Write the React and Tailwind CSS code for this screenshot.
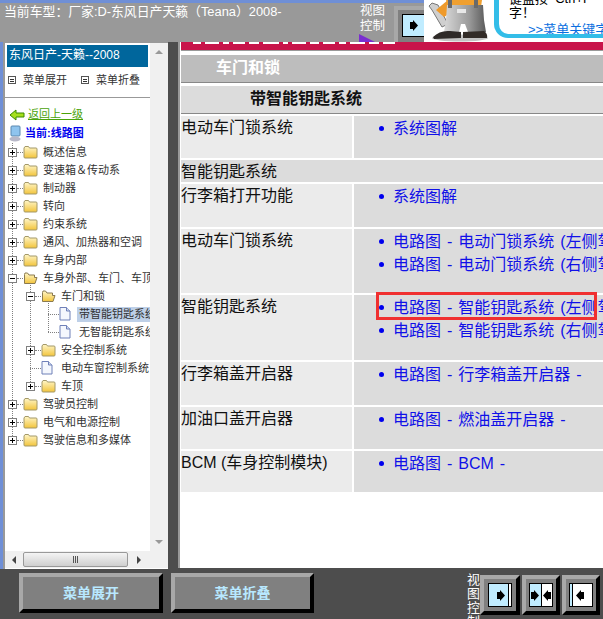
import React from "react";

const cjk = { fontFamily: '"Liberation Sans","Noto Sans CJK SC",sans-serif' };

function Box({ open }) {
  return (
    <span className="w-[9px] h-[9px] border border-[#808080] bg-white flex items-center justify-center relative shrink-0">
      <span className="absolute w-[5px] h-px bg-black" />
      {!open && <span className="absolute w-px h-[5px] bg-black" />}
    </span>
  );
}

function Folder({ open }) {
  return (
    <svg width="15" height="14" viewBox="0 0 15 14" className="shrink-0">
      <defs>
        <linearGradient id="fg" x1="0" y1="0" x2="0" y2="1">
          <stop offset="0" stopColor="#fff6c8" />
          <stop offset="1" stopColor="#f2c43c" />
        </linearGradient>
      </defs>
      {open ? (
        <path d="M1.5 3.5 L1.5 12.5 L12 12.5 L14 6.5 L11.5 6.5 L11.5 4 L6 4 L4.5 2 L2 2 Z" fill="url(#fg)" stroke="#8a7a50" />
      ) : (
        <path d="M1 3 L2 1.5 L5.5 1.5 L6.5 3 L13 3 Q14 3 14 4 L14 12 Q14 13 13 13 L2 13 Q1 13 1 12 Z" fill="url(#fg)" stroke="#a39868" />
      )}
    </svg>
  );
}

function Doc() {
  return (
    <svg width="12" height="14" viewBox="0 0 12 14" className="shrink-0">
      <path d="M1 .5 L7.5 .5 L11 4 L11 13 L1 13 Z" fill="#f4f7fd" stroke="#6f80b8" />
      <path d="M7.5 .5 L7.5 4 L11 4" fill="#cfd9ef" stroke="#6f80b8" />
    </svg>
  );
}

function TreeRow({ indent, kind, text, open, selected }) {
  const doc = kind === "doc";
  return (
    <div className="h-[18px] flex items-center whitespace-nowrap relative" style={{ paddingLeft: indent }}>
      {!doc && <Box open={open} />}
      <span className={"border-t border-dotted border-[#808080] shrink-0 " + (doc ? "w-[11px]" : "w-[6px]")} />
      {doc ? <Doc /> : <Folder open={open} />}
      <span
        className={
          "text-[11px] leading-[15px] px-[2px] text-[#333] " +
          (doc ? "ml-[6px] " : "ml-[3px] ") +
          (selected ? "bg-[#bed0e8]" : "")
        }
      >
        {text}
      </span>
    </div>
  );
}

function Row({ left, links, h }) {
  return (
    <div className="flex gap-[2px] mt-[2px]" style={{ height: h }}>
      <div className="w-[171px] bg-[#ebebeb] text-[16px] leading-[22px] text-[#111] pt-[1px] whitespace-nowrap">{left}</div>
      <div className="flex-1 bg-[#dcdcdc] pt-[1px] overflow-hidden">
        {links.map((l, i) => (
          <div key={i} className="flex items-center h-[23px] whitespace-nowrap text-[16px] text-[#1010e8] pl-[25px] [word-spacing:1.5px]">
            <span className="w-[5px] h-[5px] rounded-full bg-[#0000ee] mr-[9px] shrink-0" />
            {l}
          </div>
        ))}
      </div>
    </div>
  );
}

function Bevel({ w, children }) {
  return (
    <div
      className={
        "flex items-center justify-center border-[4px] border-t-[#a8a8a8] border-l-[#a8a8a8] border-r-black border-b-black bg-[#808080] shrink-0 " +
        w
      }
    >
      {children}
    </div>
  );
}

function Tri({ d }) {
  return (
    <svg width="8" height="11" viewBox="0 0 8 11">
      {d === "r" ? (
        <path d="M0 2 H3 V0 L8 5.5 L3 11 V9 H0 Z" fill="#000" />
      ) : (
        <path d="M8 2 H5 V0 L0 5.5 L5 11 V9 H8 Z" fill="#000" />
      )}
    </svg>
  );
}

function Split({ mode }) {
  return (
    <div className="w-[24px] h-[24px] border border-black flex bg-white shrink-0">
      {mode === "r" && (
        <>
          <div className="flex-1 bg-[#c0ecff] flex items-center justify-end pr-[3px]"><Tri d="r" /></div>
          <div className="w-[3px] border-l border-black" />
        </>
      )}
      {mode === "m" && (
        <>
          <div className="flex-1 bg-[#c0ecff] border-r border-black flex items-center justify-center"><Tri d="r" /></div>
          <div className="flex-1 flex items-center justify-center"><Tri d="l" /></div>
        </>
      )}
      {mode === "l" && (
        <>
          <div className="w-[3px] bg-[#c0ecff] border-r border-black" />
          <div className="flex-1 flex items-center justify-start pl-[3px]"><Tri d="l" /></div>
        </>
      )}
    </div>
  );
}

function Mechanic() {
  return (
    <svg width="70" height="42" viewBox="0 0 70 42" className="shrink-0 bg-white -mt-[3px]">
      <defs>
        <linearGradient id="pants" x1="0" y1="0" x2="1" y2="0">
          <stop offset="0" stopColor="#d8d8d8" />
          <stop offset="0.6" stopColor="#9a9a9a" />
          <stop offset="1" stopColor="#5a5a5a" />
        </linearGradient>
      </defs>
      <ellipse cx="36" cy="38" rx="28" ry="3.5" fill="#c4c4c4" />
      <path d="M8 3 L14 5 L24 24 L18 27 L8 10 L5 6 Z" fill="#cfcfcf" stroke="#777" />
      <path d="M12 10 L24 0 L32 0 L28 12 L20 17 Z" fill="#ef9a2a" />
      <path d="M22 0 L58 0 L57 7 L24 7 Z" fill="#f0a030" />
      <path d="M23 5 L59 5 L60 20 L62 32 L44 32 L41 24 L37 24 L35 32 L20 32 L22 20 Z" fill="url(#pants)" />
      <rect x="33" y="9" width="9" height="4" fill="#e8e8e8" />
      <path d="M24 0 L28 0 L28 8 L24 8 Z M50 0 L54 0 L54 8 L50 8 Z" fill="#6a6a6a" />
      <path d="M9 37 Q16 30 26 31 L37 32 L37 38 L10 39 Z" fill="#2f2a28" />
      <path d="M39 32 L60 31 Q64 34 63 38 L39 38 Z" fill="#332c28" />
    </svg>
  );
}

const tree = [
  [3, "f", "概述信息"],
  [3, "f", "变速箱＆传动系"],
  [3, "f", "制动器"],
  [3, "f", "转向"],
  [3, "f", "约束系统"],
  [3, "f", "通风、加热器和空调"],
  [3, "f", "车身内部"],
  [3, "f", "车身外部、车门、车顶", true],
  [21, "f", "车门和锁", true],
  [43, "doc", "带智能钥匙系统", false, true],
  [43, "doc", "无智能钥匙系统"],
  [21, "f", "安全控制系统"],
  [25, "doc", "电动车窗控制系统"],
  [21, "f", "车顶"],
  [3, "f", "驾驶员控制"],
  [3, "f", "电气和电源控制"],
  [3, "f", "驾驶信息和多媒体"],
];

function MenuIcon({ cls }) {
  return (
    <span className={"w-[8px] h-[8px] border border-[#555] flex flex-col justify-center gap-px px-px shrink-0 " + cls}>
      <span className="h-px bg-[#333]" />
      <span className="h-px bg-[#333]" />
    </span>
  );
}

export default function App() {
  return (
    <div className="w-[603px] h-[619px] overflow-hidden flex flex-col bg-[#4d4d4d]" style={cjk}>
      <div className="h-[3px] bg-[#6f8fd6] shrink-0" />
      <div className="h-[39px] bg-[#999999] flex shrink-0 relative">
        <div className="w-[356px] shrink-0 text-white text-[12.85px] leading-[16px] pl-[4px] pt-[1px] whitespace-nowrap overflow-hidden">
          当前车型：厂家:D-东风日产天籁（Teana）2008-
        </div>
        <div className="w-[38px] shrink-0 text-white text-[12.5px] leading-[14px] pt-[1px] pl-[4px] relative overflow-hidden">
          <div>视图</div>
          <div className="pt-[1px]">控制</div>
          <div className="absolute left-[3px] top-[31px] w-0 h-0 border-l-[16px] border-l-[#7a2ed0] border-b-[8px] border-b-transparent border-t-[8px] border-t-transparent" />
        </div>
        <div className="w-[30px] shrink-0 mt-[3px] h-[36px] bg-[#808080] border-t-[4px] border-l-[4px] border-[#a8a8a8] pt-[4px] pl-[4px] overflow-hidden">
          <div className="w-[24px] h-[23px] border border-black bg-[#c0ecff] flex items-center justify-center">
            <Tri d="r" />
          </div>
        </div>
        <Mechanic />
        <div className="flex-1 bg-white -mt-[3px] overflow-hidden">
          <div className="h-[38px] rounded-bl-[14px] border-l-[5px] border-b-[4px] border-[#33bde8] pl-[10px] text-[13px] leading-[14px] text-black whitespace-nowrap overflow-hidden">
            <div className="-mt-[8px]">键盘按 &nbsp;Ctrl+F</div>
            <div>字！</div>
            <div className="text-[#0a6fe0] underline mt-[3px] ml-[19px]">&gt;&gt;菜单关键字</div>
          </div>
        </div>
      </div>

      <div className="h-[527px] flex shrink-0">
        {/* left panel */}
        <div className="w-[168px] shrink-0 flex border-l-[3px] border-[#6f8fd6] bg-[#999999] pl-[2px] pt-[1px]">
          <div className="flex-1 bg-white flex flex-col min-w-0">
            <div className="flex-1 flex min-h-0">
              <div className="flex-1 min-w-0 overflow-hidden">
                <div className="mx-[2px] mt-[2px] h-[22px] bg-[#00669c] text-white text-[12px] leading-[21px] pl-[2px] whitespace-nowrap">东风日产-天籁--2008</div>
                <div className="flex items-start pt-[7px] h-[31px] text-[11px] leading-[13px] text-[#333] pl-[3px] border-b border-[#999]">
                  <MenuIcon cls="mr-[7px] mt-[2px]" />
                  <span className="whitespace-nowrap">菜单展开</span>
                  <MenuIcon cls="ml-[14px] mr-[7px] mt-[2px]" />
                  <span className="whitespace-nowrap">菜单折叠</span>
                </div>
                <div className="flex items-center h-[17px] pl-[4px] mt-[8px]">
                  <svg width="16" height="12" viewBox="0 0 16 12" className="shrink-0"><path d="M1 6 L7 1 V4 H15 V8 H7 V11 Z" fill="#a6e01c" stroke="#3a8a00" /></svg>
                  <span className="ml-[3px] text-[11px] text-[#4aa30a] underline whitespace-nowrap">返回上一级</span>
                </div>
                <div className="flex items-center h-[17px] pl-[3px] mt-[2px]">
                  <svg width="14" height="17" viewBox="0 0 14 17" className="shrink-0">
                    <rect x="3" y="1" width="9" height="10" rx="1" fill="#8fc4ee" stroke="#5a88b0" />
                    <ellipse cx="7" cy="14" rx="5.5" ry="2.5" fill="#b8b8c8" />
                  </svg>
                  <span className="ml-[3px] text-[11px] font-bold text-[#0000ee] whitespace-nowrap">当前:线路图</span>
                </div>
                <div className="relative mt-[1px]">
                  <div className="absolute left-[7px] top-0 h-[297px] border-l border-dotted border-[#808080]" />
                  <div className="absolute left-[25px] top-[135px] h-[108px] border-l border-dotted border-[#808080]" />
                  <div className="absolute left-[43px] top-[153px] h-[36px] border-l border-dotted border-[#808080]" />
                  {tree.map((t, i) => (
                    <TreeRow key={i} indent={t[0]} kind={t[1]} text={t[2]} open={t[3]} selected={t[4]} />
                  ))}
                </div>
              </div>
              <div className="w-[18px] bg-[#f0f0f0] flex flex-col justify-between items-center py-[7px] shrink-0">
                <span className="w-0 h-0 border-x-[4px] border-x-transparent border-b-[4px] border-b-[#999]" />
                <span className="w-0 h-0 border-x-[4px] border-x-transparent border-t-[4px] border-t-[#999]" />
              </div>
            </div>
            <div className="h-[17px] bg-[#f0f0f0] flex items-center shrink-0 pr-[18px] mb-[1px]">
              <span className="w-[18px] flex justify-center"><span className="w-0 h-0 border-y-[4px] border-y-transparent border-r-[4px] border-r-[#444]" /></span>
              <div className="w-[105px] h-[15px] border border-[#999] rounded-[2px] bg-gradient-to-b from-[#f4f4f4] to-[#cfcfcf] flex justify-center items-center gap-px">
                <span className="w-px h-[7px] bg-[#555]" /><span className="w-px h-[7px] bg-[#555]" /><span className="w-px h-[7px] bg-[#555]" />
              </div>
              <span className="flex-1 flex justify-center"><span className="w-0 h-0 border-y-[4px] border-y-transparent border-l-[4px] border-l-[#444]" /></span>
            </div>
          </div>
        </div>

        <div className="w-[10px] shrink-0 bg-[#4d4d4d]" />

        {/* right panel */}
        <div className="flex-1 min-w-0 bg-white border-l-[2px] border-[#999] pl-[1px] overflow-hidden mb-[1px]">
          <div className="h-[9px] bg-[#c8144a] border-b border-[#999] flex items-start gap-[4px] pl-[12px]">
            {[8, 14, 6, 12, 10, 16, 5, 14, 9, 12, 7, 15, 10, 12].map((w, i) => (
              <span key={i} className="h-[2px] bg-white" style={{ width: w }} />
            ))}
          </div>
          <div className="h-[4px]" />
          <div className="h-[28px] bg-[#bdbdbd] border-b border-[#888] text-white font-bold text-[16px] leading-[25px] pl-[35px]">车门和锁</div>
          <div className="h-[28px] mt-[3px] bg-[#dcdcdc] border-b border-[#888] font-bold text-[16px] leading-[26px] pl-[69px] text-[#111]">带智能钥匙系统</div>
          <Row left="电动车门锁系统" h={42} links={["系统图解"]} />
          <div className="h-[22px] mt-[2px] bg-[#dcdcdc] text-[16px] leading-[23px] text-[#111]">智能钥匙系统</div>
          <Row left="行李箱打开功能" h={43} links={["系统图解"]} />
          <Row left="电动车门锁系统" h={64} links={["电路图 - 电动门锁系统 (左侧驾驶)", "电路图 - 电动门锁系统 (右侧驾驶)"]} />
          <div className="relative">
            <Row left="智能钥匙系统" h={65} links={["电路图 - 智能钥匙系统 (左侧驾驶)", "电路图 - 智能钥匙系统 (右侧驾驶)"]} />
            <div className="absolute left-[195px] -top-[3px] w-[221px] h-[28px] border-[3px] border-[#f03030]" />
          </div>
          <Row left="行李箱盖开启器" h={43} links={["电路图 - 行李箱盖开启器 -"]} />
          <Row left="加油口盖开启器" h={42} links={["电路图 - 燃油盖开启器 -"]} />
          <Row left="BCM (车身控制模块)" h={41} links={["电路图 - BCM -"]} />
        </div>
      </div>

      {/* bottom bar */}
      <div className="flex-1 flex items-start pl-[19px] pt-[4px] min-h-0 overflow-hidden">
        <Bevel w="w-[144px] h-[40px]">
          <span className="text-[#b8e8ff] font-bold text-[14px]">菜单展开</span>
        </Bevel>
        <div className="w-[8px] shrink-0" />
        <Bevel w="w-[143px] h-[40px]">
          <span className="text-[#b8e8ff] font-bold text-[14px]">菜单折叠</span>
        </Bevel>
        <div className="w-[153px] shrink-0" />
        <div className="w-[13px] text-white text-[13px] leading-[14px] shrink-0">视图控制</div>
        <div className="flex mt-[2px]">
          <Bevel w="w-[40px] h-[40px]"><Split mode="r" /></Bevel>
          <div className="w-[2px] shrink-0" />
          <Bevel w="w-[38px] h-[40px]"><Split mode="m" /></Bevel>
          <div className="w-[2px] shrink-0" />
          <Bevel w="w-[38px] h-[40px]"><Split mode="l" /></Bevel>
        </div>
      </div>
    </div>
  );
}
